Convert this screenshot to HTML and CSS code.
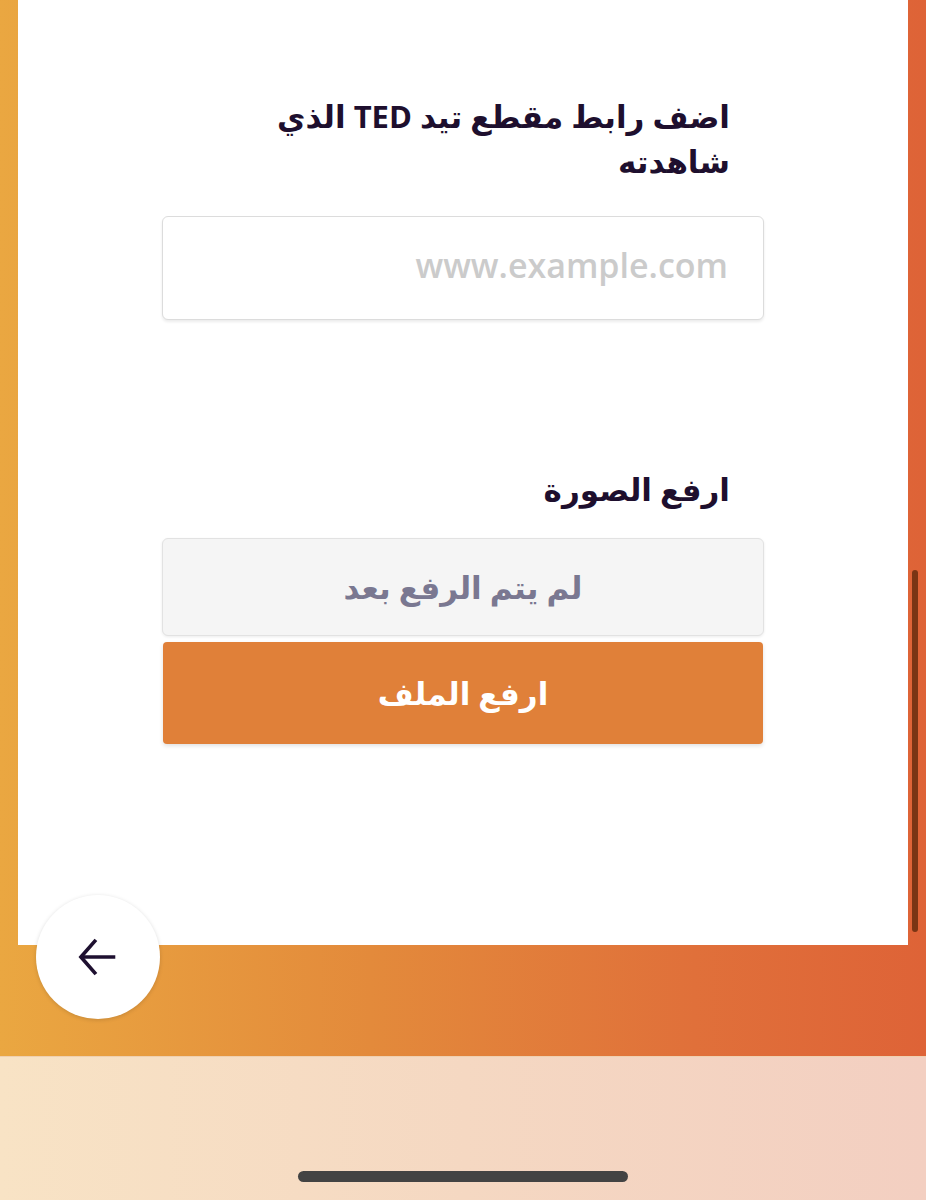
FILE: index.html
```html
<!DOCTYPE html>
<html lang="ar" dir="rtl">
<head>
  <meta charset="UTF-8" />
  <meta name="viewport" content="width=device-width, initial-scale=1.0"/>
  <title>رابط TED</title>
  <link rel="stylesheet" href="styles.css">
</head>
<body>
  <!-- Orange page area with the white form card -->
  <div class="page">
    <main class="card">
      <form class="form">
        <label class="field-label" for="ted-link">اضف رابط مقطع تيد TED الذي شاهدته</label>
        <input type="text" id="ted-link" class="text-input" placeholder="www.example.com" dir="ltr">

        <label class="field-label upload-label">ارفع الصورة</label>
        <div class="upload-status">لم يتم الرفع بعد</div>
        <button type="button" class="upload-btn">ارفع الملف</button>
      </form>
    </main>

    <!-- Floating back button -->
    <button type="button" class="back-btn" aria-label="رجوع">
      <svg width="50" height="50" viewBox="0 0 24 24" fill="none" stroke="#1e1030" stroke-width="1.75">
        <path d="M20.3 12H4.2"/>
        <path d="M11 3.8L3.8 12l7.2 8.2"/>
      </svg>
    </button>

    <div class="scrollbar"></div>
  </div>

  <!-- Browser bottom bar -->
  <footer class="toolbar">
    <div class="home-indicator"></div>
  </footer>
</body>
</html>
```

FILE: styles.css
```css
/* Base */
* {
  box-sizing: border-box;
}
body {
  margin: 0;
  font-family: "Open Sans", "DejaVu Sans", sans-serif;
  color: #1e0f2e;
  direction: rtl;
}

/* Orange page area */
.page {
  position: relative;
  height: 1056px;
  background: linear-gradient(to right, #eaa741, #e38a3b 40%, #e0703a 75%, #de6337);
  direction: ltr;
}
.card {
  width: 890px;
  height: 945px;
  margin-left: 18px;
  background-color: #fff;
  padding-top: 94px;
  direction: rtl;
}

/* Form */
.form {
  width: 602px;
  margin: 0 auto;
  display: flex;
  flex-direction: column;
}
.field-label {
  display: block;
  padding: 0 34px 0 40px;
  font-size: 31px;
  font-weight: bold;
  line-height: 45px;
}
.text-input {
  margin-top: 32px;
  height: 104px;
  padding: 0 35px 6px;
  border: 1px solid #dcdcdc;
  border-radius: 6px;
  box-shadow: 0 2px 3px rgba(0, 0, 0, 0.08);
  background: #fff;
  font-family: "Open Sans", sans-serif;
  font-size: 34px;
  font-weight: 600;
  text-align: right;
  outline: none;
}
.text-input::placeholder {
  color: #cbcbcb;
}
.upload-label {
  margin-top: 147px;
}
.upload-status {
  margin-top: 26px;
  height: 98px;
  display: flex;
  align-items: center;
  justify-content: center;
  background-color: #f5f5f5;
  border: 1px solid #e2e2e2;
  border-radius: 6px;
  box-shadow: 0 1px 3px rgba(0, 0, 0, 0.08);
  color: #7a7891;
  font-size: 31px;
  font-weight: bold;
}
.upload-btn {
  margin-top: 6px;
  height: 102px;
  margin-left: 1px;
  margin-right: 1px;
  border: none;
  border-radius: 4px;
  background-color: #e08039;
  box-shadow: 0 2px 4px rgba(0, 0, 0, 0.12);
  color: #fff;
  font-family: "Open Sans", "DejaVu Sans", sans-serif;
  font-size: 31px;
  font-weight: bold;
  cursor: pointer;
}

/* Floating back button */
.back-btn {
  position: absolute;
  left: 36px;
  top: 895px;
  width: 124px;
  height: 124px;
  border: none;
  border-radius: 50%;
  background-color: #fff;
  box-shadow: 0 1px 4px rgba(0, 0, 0, 0.15);
  display: flex;
  align-items: center;
  justify-content: center;
  padding: 0;
  cursor: pointer;
}

/* Scroll indicator */
.scrollbar {
  position: absolute;
  left: 912px;
  top: 570px;
  width: 6px;
  height: 362px;
  border-radius: 3px;
  background-color: #7a3514;
}

/* Bottom toolbar */
.toolbar {
  height: 144px;
  background: linear-gradient(to right, #f8e3c5, #f5d8c2 50%, #f3cfc1);
  border-top: 1px solid #efd0b0;
  display: flex;
  justify-content: center;
  align-items: flex-end;
  padding-bottom: 18px;
}
.home-indicator {
  width: 330px;
  height: 11px;
  border-radius: 6px;
  background-color: #434343;
}
```
